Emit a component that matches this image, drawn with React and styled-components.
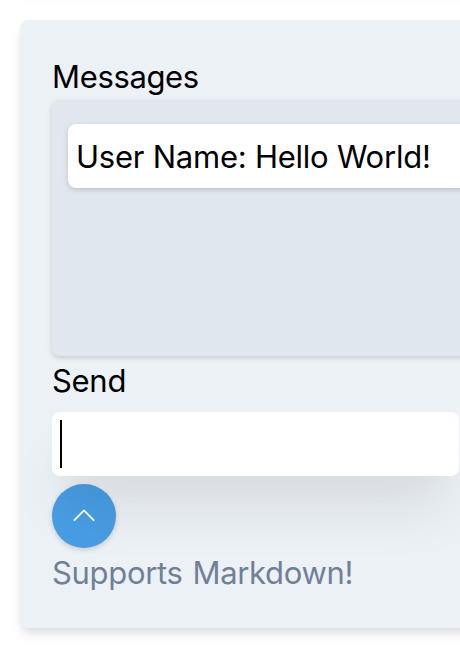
import React from "react";
import styled, { createGlobalStyle } from "styled-components";

const GlobalStyle = createGlobalStyle`
  *, *::before, *::after { box-sizing: border-box; }
  html, body { margin: 0; background: #fff; overflow: hidden; }
`;

const smallShadow = "0 2px 6px rgba(0, 0, 0, 0.1), 0 2px 4px rgba(0, 0, 0, 0.06)";
const cardShadow = "0 8px 12px -2px rgba(0, 0, 0, 0.1), 0 4px 8px -2px rgba(0, 0, 0, 0.06)";

const Page = styled.main`
  width: 460px;
  height: 664px;
  overflow: hidden;
  font: 31px/48px Inter, sans-serif;
  color: #000;
`;

const PreviousCard = styled.div`
  height: 8px;
  width: 600px;
  margin: -20px 0 32px 20px;
  border-radius: 8px;
  box-shadow: ${cardShadow};
`;

const Card = styled.section`
  width: 600px;
  height: 608px;
  margin-left: 20px;
  padding: 32px;
  border-radius: 8px;
  background: #ecf1f6;
  box-shadow: ${cardShadow};
`;

const Text = styled.div`
  height: 48px;
  padding-top: 1px;
  color: ${(p) => (p.$muted ? "#718096" : "#000")};
  letter-spacing: ${(p) => p.$tracking}px;
  word-spacing: ${(p) => p.$wordGap || 0}px;
  white-space: nowrap;
`;

const MessageList = styled.div`
  height: 256px;
  padding: 24px 16px;
  border-radius: 8px;
  background: #e1e7ef;
  box-shadow: ${smallShadow};
`;

const Message = styled.div`
  height: 64px;
  padding: 8px;
  border-radius: 8px;
  background: #fff;
  box-shadow: ${smallShadow};
`;

const Field = styled.div`
  position: relative;
  z-index: 1;
  width: 407px;
  height: 64px;
  margin-top: 8px;
  padding: 8px;
  border-radius: 8px;
  background: #fff;
  box-shadow: 0 40px 60px -12px rgba(0, 0, 0, 0.11), 0 20px 32px -12px rgba(0, 0, 0, 0.04);
`;

const Caret = styled.div`
  width: 2px;
  height: 48px;
  background: #000;
`;

const SendButton = styled.button`
  display: flex;
  align-items: center;
  justify-content: center;
  width: 64px;
  height: 64px;
  margin: 8px 0 0;
  padding: 0;
  border: 0;
  border-radius: 50%;
  background: #489de3;
  color: #fff;
  box-shadow: ${smallShadow};
`;

export default function App() {
  return (
    <Page>
      <GlobalStyle />
      <PreviousCard />
      <Card>
        <Text $tracking={-0.35}>Messages</Text>
        <MessageList>
          <Message>
            <Text $tracking={-0.24}>User Name: Hello World!</Text>
          </Message>
        </MessageList>
        <Text $tracking={-0.3}>Send</Text>
        <Field><Caret /></Field>
        <SendButton aria-label="Send">
          <svg width="24" height="14" viewBox="0 0 24 14" fill="none">
            <path d="M2.4 11.2 12 1.4 21.6 11.2" stroke="currentColor" strokeWidth="1.8" strokeLinecap="round" strokeLinejoin="round" />
          </svg>
        </SendButton>
        <Text $muted $tracking={-0.32} $wordGap={1.5}>Supports Markdown!</Text>
      </Card>
    </Page>
  );
}
